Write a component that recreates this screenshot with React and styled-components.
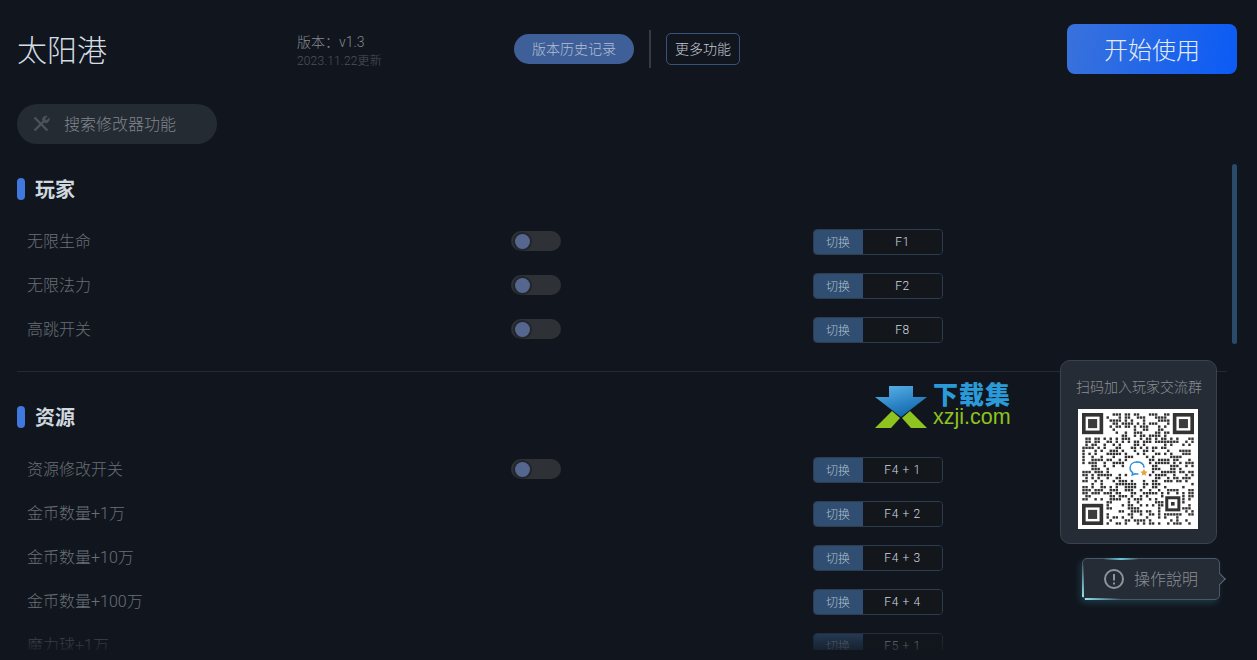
import React from 'react';
import styled, { createGlobalStyle } from 'styled-components';

const GlobalStyle = createGlobalStyle`
 html, body {
  margin: 0;
  padding: 0;
  height: 100%;
  overflow: hidden;
  background: #11161e;
 }
 * {
  box-sizing: border-box;
 }
`;

const sections = [
 {
  title: '玩家',
  rows: [
   { name: '无限生命', toggle: true, hotkey: 'F1' },
   { name: '无限法力', toggle: true, hotkey: 'F2' },
   { name: '高跳开关', toggle: true, hotkey: 'F8' },
  ],
 },
 {
  title: '资源',
  rows: [
   { name: '资源修改开关', toggle: true, hotkey: 'F4 + 1' },
   { name: '金币数量+1万', hotkey: 'F4 + 2' },
   { name: '金币数量+10万', hotkey: 'F4 + 3' },
   { name: '金币数量+100万', hotkey: 'F4 + 4' },
   { name: '魔力球+1万', hotkey: 'F5 + 1' },
  ],
 },
];

// not a real code, only the same look: finder squares plus seeded noise
const QR_SIZE = 37;
const inFinder = (x, y) => {
 const corner = (cx, cy) => x >= cx && x < cx + 8 && y >= cy && y < cy + 8;
 return corner(0, 0) || corner(QR_SIZE - 8, 0) || corner(0, QR_SIZE - 8);
};
const qrModules = () => {
 const cells = [];
 let seed = 7411;
 for (let y = 0; y < QR_SIZE; y++) {
  for (let x = 0; x < QR_SIZE; x++) {
   seed = (seed * 1103515245 + 12345) & 0x7fffffff;
   const dark = (seed >> 16) % 100 < 50;
   const dx = x - 18;
   const dy = y - 18;
   const inLogo = dx * dx + dy * dy < 20;
   const inSmall = x >= 27 && x <= 32 && y >= 27 && y <= 32;
   if (dark && !inFinder(x, y) && !inLogo && !inSmall) cells.push([x, y]);
  }
 }
 return cells;
};

function Finder({ x, y }) {
 return (
  <g>
   <rect x={x + 0.6} y={y + 0.6} width='5.8' height='5.8' fill='none' stroke='#333' strokeWidth='1.2' />
   <rect x={x + 2} y={y + 2} width='3' height='3' fill='#3c3c3c' />
  </g>
 );
}

function QrCode() {
 return (
  <QrBox>
   <svg width='112' height='112' viewBox='0 0 37 37'>
    {qrModules().map(([x, y]) => (
     <rect key={`${x}-${y}`} x={x + 0.1} y={y + 0.1} width='0.8' height='0.8' fill='#333' />
    ))}
    <Finder x={0} y={0} />
    <Finder x={30} y={0} />
    <Finder x={0} y={30} />
    <rect x='28' y='28' width='4' height='4' fill='none' stroke='#333' strokeWidth='1' />
    <rect x='29.4' y='29.4' width='1.2' height='1.2' fill='#333' />
   </svg>
   <QrLogo viewBox='0 0 20 18' width='20' height='18'>
    <path d='M9 2C4.8 2 2 4.6 2 8c0 2 1 3.6 2.6 4.7L4.2 15l2.7-1.3c1 .3 2 .4 3 .3' fill='none' stroke='#2f8fd6' strokeWidth='1.5' strokeLinecap='round' />
    <path d='M9 2c3.8 0 6.6 2.2 7 5.2' fill='none' stroke='#2f8fd6' strokeWidth='1.5' strokeLinecap='round' />
    <path d='M16 9l1.2 2.3 2.3.5-1.7 1.6.4 2.4-2.2-1.2-2.2 1.2.4-2.4-1.7-1.6 2.3-.5z' fill='#e3a63d' />
   </QrLogo>
  </QrBox>
 );
}

function Watermark() {
 return (
  <WatermarkBox>
   <svg width='52' height='44' viewBox='0 0 52 44'>
    <defs>
     <linearGradient id='arrowFill' x1='0' y1='0' x2='0.5' y2='1'>
      <stop offset='0' stopColor='#5cb6ec' />
      <stop offset='1' stopColor='#1268ae' />
     </linearGradient>
    </defs>
    <path d='M14 1h24v11h14L26 32 0 12h14z' fill='url(#arrowFill)' />
    <path d='M17 26l8 7-9 10H0z' fill='#8fc31f' />
    <path d='M35 26l-8 7 9 10h16z' fill='#8fc31f' />
   </svg>
   <WatermarkText>
    <WatermarkTitle>下载集</WatermarkTitle>
    <WatermarkUrl>xzji.com</WatermarkUrl>
   </WatermarkText>
  </WatermarkBox>
 );
}

export default function App() {
 return (
  <Page>
   <GlobalStyle />
   <Header>
    <Title>太阳港</Title>
    <Version>
     <VersionNumber>版本：v1.3</VersionNumber>
     <VersionDate>2023.11.22更新</VersionDate>
    </Version>
    <HistoryButton>版本历史记录</HistoryButton>
    <Divider />
    <MoreButton>更多功能</MoreButton>
    <StartButton>开始使用</StartButton>
   </Header>

   <SearchPill>
    <svg width='20' height='20' viewBox='0 0 20 20' fill='none' stroke='#4c525a' strokeWidth='2.4'>
     <path d='M3.5 16.5L13 7' />
     <path d='M11.5 6c0-2.4 2-4.2 4.6-3.8l-2.3 2.4.4 1.6 1.6.4 2.4-2.3c.4 2.6-1.4 4.6-3.8 4.6z' fill='#4c525a' strokeWidth='1' />
     <path d='M3.5 3.5L16.5 16.5' />
    </svg>
    <SearchText>搜索修改器功能</SearchText>
   </SearchPill>

   <ScrollArea>
    <List>
     {sections.map((section, index) => (
      <Section key={section.title} $first={index === 0}>
       <SectionHead>
        <SectionMark />
        <SectionTitle>{section.title}</SectionTitle>
       </SectionHead>
       {section.rows.map((row) => (
        <Row key={row.name}>
         <RowName>{row.name}</RowName>
         <ToggleCell>
          {row.toggle && (
           <Toggle>
            <Knob />
           </Toggle>
          )}
         </ToggleCell>
         <Hotkey>
          <HotkeyLabel>切换</HotkeyLabel>
          <HotkeyValue>{row.hotkey}</HotkeyValue>
         </Hotkey>
        </Row>
       ))}
      </Section>
     ))}
    </List>
    <ScrollThumb />
    <BottomFade />
   </ScrollArea>

   <Watermark />

   <QrCard>
    <QrTitle>扫码加入玩家交流群</QrTitle>
    <QrCode />
   </QrCard>

   <HelpButton>
    <HelpGlowTop />
    <HelpGlowLeft />
    <HelpGlowBottom />
    <svg width='22' height='22' viewBox='0 0 22 22' fill='none' stroke='#8f949a' strokeWidth='2'>
     <circle cx='11' cy='11' r='9' />
     <path d='M11 6v6.5' />
     <path d='M11 14.6v2' />
    </svg>
    <HelpText>操作說明</HelpText>
    <HelpArrow />
   </HelpButton>
  </Page>
 );
}

const FONT = `Roboto, 'Noto Sans CJK SC', 'Noto Sans', sans-serif`;

const Page = styled.div`
 position: relative;
 width: 1257px;
 height: 660px;
 overflow: hidden;
 background: #11161e;
 font-family: ${FONT};
 font-weight: 300;
 padding: 24px 20px 0 17px;
`;

const Header = styled.header`
 display: flex;
 align-items: center;
 height: 50px;
`;

const Title = styled.h1`
 width: 280px;
 margin: 0;
 padding-top: 4px;
 font-size: 30px;
 font-weight: 300;
 line-height: 46px;
 color: #d4dde4;
`;

const Version = styled.div`
 width: 217px;
 display: flex;
 flex-direction: column;
 margin-top: 6px;
`;

const VersionNumber = styled.div`
 font-size: 14px;
 line-height: 19px;
 color: #858b93;
`;

const VersionDate = styled.div`
 font-size: 12px;
 line-height: 19px;
 letter-spacing: 0.15px;
 color: #4c525a;
`;

const HistoryButton = styled.div`
 width: 120px;
 height: 30px;
 padding-bottom: 2px;
 border-radius: 15px;
 background: #3f5f98;
 color: #b4c0d2;
 font-size: 14px;
 display: flex;
 align-items: center;
 justify-content: center;
`;

const Divider = styled.div`
 width: 2px;
 height: 38px;
 margin: 0 15px;
 background: #343b46;
`;

const MoreButton = styled.div`
 width: 74px;
 height: 32px;
 padding-bottom: 3px;
 border: 1px solid #38537a;
 border-radius: 5px;
 color: #c3cad2;
 font-size: 14px;
 display: flex;
 align-items: center;
 justify-content: center;
`;

const StartButton = styled.div`
 width: 170px;
 height: 50px;
 padding-bottom: 2px;
 margin-left: auto;
 border-radius: 8px;
 background: linear-gradient(100deg, #3a72dc 0%, #0b5bf5 100%);
 color: #e3ebf5;
 font-size: 24px;
 display: flex;
 align-items: center;
 justify-content: center;
`;

const SearchPill = styled.div`
 width: 200px;
 height: 40px;
 margin-top: 30px;
 padding-left: 14px;
 border-radius: 20px;
 background: #242b33;
 color: #80868c;
 font-size: 16px;
 display: flex;
 align-items: center;
 gap: 13px;
`;

const SearchText = styled.span`
 padding-bottom: 2px;
`;

const ScrollArea = styled.div`
 position: relative;
 height: 486px;
 margin-top: 20px;
 overflow: hidden;
`;

const List = styled.div`
 width: 1210px;
`;

const Section = styled.section`
 padding-top: ${(p) => (p.$first ? '0' : '20px')};
 padding-bottom: 20px;
 border-bottom: 1px solid #232a33;
 &:last-child {
  border-bottom: none;
 }
`;

const SectionHead = styled.h2`
 display: flex;
 align-items: center;
 gap: 10px;
 height: 50px;
 margin: 0 0 5px;
 font-size: 20px;
 font-weight: 700;
 color: #d0d8df;
`;

const SectionTitle = styled.span`
 padding-bottom: 2px;
`;

const SectionMark = styled.i`
 display: block;
 width: 8px;
 height: 22px;
 border-radius: 4px;
 background: #3f78de;
`;

const Row = styled.div`
 display: flex;
 align-items: center;
 height: 44px;
 padding-left: 10px;
`;

const RowName = styled.div`
 width: 484px;
 padding-bottom: 2px;
 font-size: 16px;
 color: #6a7077;
`;

const ToggleCell = styled.div`
 width: 302px;
`;

const Toggle = styled.div`
 width: 50px;
 height: 20px;
 border-radius: 10px;
 background: #2e3237;
 display: flex;
 align-items: center;
 padding-left: 4px;
`;

const Knob = styled.div`
 width: 15px;
 height: 15px;
 border-radius: 50%;
 background: #55668f;
 box-shadow: 0 0 0 2px rgba(20, 24, 32, 0.45);
`;

const Hotkey = styled.div`
 width: 130px;
 height: 26px;
 margin-top: 1px;
 display: flex;
 border: 1px solid #2e3d4d;
 border-radius: 4px;
 overflow: hidden;
 font-size: 12px;
`;

const HotkeyLabel = styled.div`
 width: 50px;
 margin: -1px 0 -1px -1px;
 padding-bottom: 1px;
 background: #2f4e72;
 color: #b4c0cc;
 display: flex;
 align-items: center;
 justify-content: center;
`;

const HotkeyValue = styled.div`
 flex: 1;
 background: #13161b;
 color: #d3d9e1;
 letter-spacing: 0.6px;
 display: flex;
 align-items: center;
 justify-content: center;
`;

const ScrollThumb = styled.div`
 position: absolute;
 top: 0;
 right: 0;
 width: 5px;
 height: 180px;
 border-radius: 3px;
 background: #2a4a6c;
`;

const BottomFade = styled.div`
 position: absolute;
 left: 0;
 right: 0;
 bottom: 0;
 height: 30px;
 background: linear-gradient(to bottom, rgba(17, 22, 30, 0), rgba(17, 22, 30, 0.8));
`;

const WatermarkBox = styled.div`
 position: absolute;
 left: 875px;
 top: 385px;
 display: flex;
 gap: 6px;
`;

const WatermarkText = styled.div`
 display: flex;
 flex-direction: column;
 align-items: flex-start;
`;

const WatermarkTitle = styled.div`
 font-size: 25px;
 font-weight: 900;
 line-height: 21px;
 letter-spacing: 1px;
 color: #2a9bd8;
`;

const WatermarkUrl = styled.div`
 font-family: 'Liberation Sans', sans-serif;
 font-weight: 400;
 font-size: 21.5px;
 line-height: 22px;
 color: #8fc31f;
`;

const QrCard = styled.div`
 position: absolute;
 left: 1060px;
 top: 360px;
 width: 157px;
 height: 184px;
 border: 1px solid #3a424d;
 border-radius: 10px;
 background: #262c35;
 display: flex;
 flex-direction: column;
 align-items: flex-start;
`;

const QrTitle = styled.div`
 margin: 17px 0 0 15px;
 font-size: 14px;
 line-height: 19px;
 color: #8b9097;
`;

const QrBox = styled.div`
 position: relative;
 width: 120px;
 height: 120px;
 margin: 12px 0 0 17px;
 background: #fff;
 display: flex;
 align-items: center;
 justify-content: center;
`;

const QrLogo = styled.svg`
 position: absolute;
 left: 50%;
 top: 50%;
 transform: translate(-50%, -50%);
`;

const HelpButton = styled.div`
 position: absolute;
 left: 1082px;
 top: 558px;
 width: 138px;
 height: 42px;
 border: 1px solid #48586b;
 border-radius: 5px;
 background: #262c35;
 box-shadow: -2px 3px 6px rgba(80, 190, 225, 0.2);
 color: #8a8f95;
 font-size: 16px;
 display: flex;
 align-items: center;
 gap: 9px;
 padding-left: 20px;
`;

const HelpText = styled.span`
 padding-bottom: 2px;
`;

const HelpGlowTop = styled.div`
 position: absolute;
 left: 20px;
 top: -1px;
 width: 36px;
 height: 2px;
 background: linear-gradient(to right, rgba(110, 210, 235, 0), #6fc5da 50%, rgba(110, 210, 235, 0));
`;

const HelpGlowLeft = styled.div`
 position: absolute;
 left: -1px;
 bottom: 2px;
 width: 2px;
 height: 34px;
 background: linear-gradient(to bottom, rgba(143, 224, 240, 0), #8fe0f0);
`;

const HelpGlowBottom = styled.div`
 position: absolute;
 left: 2px;
 bottom: -1px;
 width: 36px;
 height: 2px;
 background: linear-gradient(to right, #8fe0f0, rgba(143, 224, 240, 0));
`;

const HelpArrow = styled.div`
 position: absolute;
 right: -5px;
 top: 50%;
 width: 9px;
 height: 9px;
 transform: translateY(-50%) rotate(45deg);
 border-top: 1px solid #5a6c80;
 border-right: 1px solid #5a6c80;
 background: #262c35;
`;
